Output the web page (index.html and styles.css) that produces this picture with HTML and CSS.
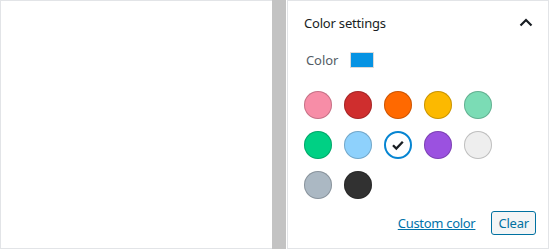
FILE: index.html
```html
<!DOCTYPE html>
<html lang="en">
<head>
<meta charset="UTF-8">
<title>Color settings</title>
<link rel="stylesheet" href="styles.css">
</head>
<body>

<div class="frame">
    <div class="editor"></div>
    <div class="splitter"></div>

    <div class="sidebar">
        <div class="panel-head">
            <span class="panel-title">Color settings</span>
            <svg class="chevron" width="24" height="24" viewBox="0 0 24 24">
                <path d="M6.5 14.5l5.5-5.5 5.5 5.5" fill="none" stroke="#191e23" stroke-width="2.2"/>
            </svg>
        </div>

        <div class="color-row">
            <span class="color-label">Color</span>
            <span class="color-indicator"></span>
        </div>

        <div class="palette" id="palette"></div>

        <div class="palette-foot">
            <a class="custom-link" href="#">Custom color</a>
            <button class="btn-clear">Clear</button>
        </div>
    </div>
</div>

<script>
// 调色板
const colors = [
    "#f78da7", "#cf2e2e", "#ff6900", "#fcb900", "#7bdcb5",
    "#00d084", "#8ed1fc", "#0693e3", "#9b51e0", "#eeeeee",
    "#abb8c3", "#313131"
];
const palette = document.getElementById("palette");
colors.forEach((c, i) => {
    const dot = document.createElement("div");
    dot.className = "swatch";
    if (i === 7) {
        dot.classList.add("selected");
        dot.innerHTML = '<svg width="20" height="20" viewBox="0 0 20 20"><path d="M5 10.2l3.3 3.3 6.5-6.8" fill="none" stroke="#191e23" stroke-width="2.3"/></svg>';
    } else {
        dot.style.background = c;
    }
    palette.appendChild(dot);
});
</script>

</body>
</html>
```

FILE: styles.css
```css
body {
    margin: 0;
    font-family: "Noto Sans", "Open Sans", sans-serif;
    font-size: 13px;
    color: #191e23;
    background: #fff;
}

.frame {
    display: flex;
    height: 249px;
    width: 549px;
}

.editor {
    width: 271px;
    border: 1px solid #e2e4e7;
    border-right: none;
}

.splitter {
    width: 14px;
    background: #c3c3c3;
    margin-right: 1px;
}

.sidebar {
    flex: 1;
    border: 1px solid #e2e4e7;
    padding: 0 12px 0 16px;
    display: flex;
    flex-direction: column;
}

.panel-head {
    display: flex;
    align-items: center;
    justify-content: space-between;
    height: 44px;
}

.panel-title {
    font-size: 13px;
    letter-spacing: -0.2px;
}

.chevron {
    margin-right: -2px;
}

.color-row {
    display: flex;
    align-items: center;
    gap: 12px;
    height: 30px;
    padding-left: 2px;
}

.color-label {
    color: #555d66;
    letter-spacing: -0.1px;
}

.color-indicator {
    width: 22px;
    height: 14px;
    background: #0693e3;
    border: 1px solid #dadada;
}

.palette {
    display: grid;
    grid-template-columns: repeat(5, 28px);
    column-gap: 12px;
    row-gap: 12px;
    margin-top: 16px;
}

.swatch {
    width: 28px;
    height: 28px;
    border-radius: 50%;
    box-shadow: inset 0 0 0 1px rgba(0,0,0,0.2);
    box-sizing: border-box;
    display: flex;
    align-items: center;
    justify-content: center;
}

.swatch.selected {
    background: #fff;
    box-shadow: none;
    border: 2px solid #0685d2;
}

.palette-foot {
    display: flex;
    align-items: center;
    justify-content: flex-end;
    gap: 16px;
    margin-top: 12px;
}

.custom-link {
    color: #0073aa;
    text-decoration: underline;
    letter-spacing: -0.3px;
}

.btn-clear {
    font-family: inherit;
    font-size: 13px;
    height: 24px;
    padding: 0 6px;
    letter-spacing: -0.2px;
    color: #0071a1;
    background: #f3f5f6;
    border: 1px solid #0071a1;
    border-radius: 3px;
}
```
